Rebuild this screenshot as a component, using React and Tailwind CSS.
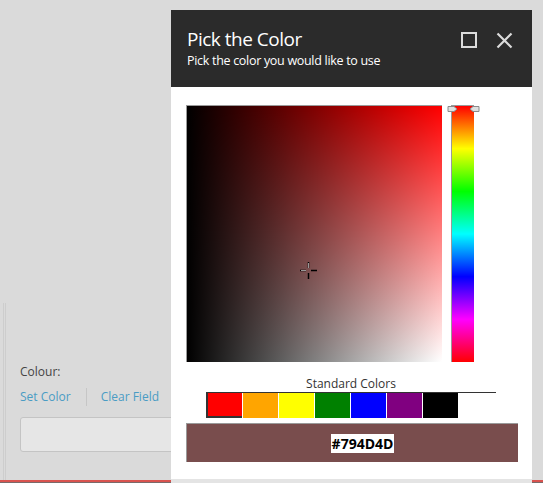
export default function App() {
  const swatches = ["#ff0000", "#ffa500", "#ffff00", "#008000", "#0000ff", "#800080", "#000000"];
  return (
    <div className="relative w-[543px] h-[483px] bg-[#dadada] overflow-hidden" style={{ fontFamily: '"Open Sans", "Noto Sans", sans-serif' }}>
      {/* background form */}
      <div className="ml-[3px] mt-[303px] h-[177px] border-l border-[#cdcdcd] pl-[1px]">
        <div className="h-full border-l border-[#cdcdcd] pl-[14px] pt-[61px]">
          <div className="text-[12px] leading-[16px] text-[#444]">Colour:</div>
          <div className="mt-[8px] flex items-center text-[12px] leading-[16px] text-[#4a9cc4]">
            <span>Set Color</span>
            <span className="ml-[15px] mr-[14px] h-[18px] w-px bg-[#c6c6c6]"></span>
            <span>Clear Field</span>
          </div>
          <div className="mt-[11px] h-[35px] w-[300px] rounded-[3px] border border-[#c4c4c4] bg-[#e6e6e6]"></div>
        </div>
      </div>
      <div className="h-[2px] bg-[#d9534f]"></div>
      <div className="h-[1px] bg-[#7a6a6a]"></div>

      {/* dialog */}
      <div className="absolute left-[171px] top-[10px] w-[361px] h-[473px] bg-white border-b-4 border-[#e4e4e4]">
        <div className="h-[77px] bg-[#2b2b2b] px-[16px] pt-[15px] flex justify-between">
          <div>
            <div className="text-[19px] leading-[28px] tracking-[-0.5px] text-white">Pick the Color</div>
            <div className="mt-[-1px] text-[12.5px] leading-[18px] tracking-[-0.3px] text-white">Pick the color you would like to use</div>
          </div>
          <div className="flex gap-[19px] pt-[7px] pr-[3px]">
            <svg width="16" height="16" viewBox="0 0 16 16">
              <rect x="1" y="1" width="14" height="14" fill="none" stroke="#dcdcdc" strokeWidth="2" />
            </svg>
            <svg width="17" height="17" viewBox="0 0 17 17">
              <path d="M1.5 1.5 L15.5 15.5 M15.5 1.5 L1.5 15.5" stroke="#dcdcdc" strokeWidth="2.2" />
            </svg>
          </div>
        </div>
        <div className="pt-[18px] pl-[15px] pr-[14px]">
          <div className="flex">
            <div className="relative w-[256px] h-[257px] border-l border-t border-[#9a9a9a] bg-[#ff0000]">
              <div className="absolute inset-0 bg-gradient-to-b from-transparent to-white"></div>
              <div className="absolute inset-0 bg-gradient-to-r from-black to-transparent"></div>
              <svg className="absolute left-[113px] top-[156px]" width="17" height="17" viewBox="0 0 17 17">
                <path d="M8.5 0 V6 M8.5 11 V17 M0 8.5 H6 M11 8.5 H17" stroke="#000" strokeWidth="1.5" />
                <path d="M8.5 1 V6 M1 8.5 H6" stroke="#fff" strokeWidth="0.6" />
              </svg>
            </div>
            <div className="relative ml-[9px] w-[23px] h-[257px] border-l border-t border-[#9a9a9a]" style={{ background: "linear-gradient(to bottom, #ff0000 0%, #ffff00 16.66%, #00ff00 33.33%, #00ffff 50%, #0000ff 66.66%, #ff00ff 83.33%, #ff0000 100%)" }}>
              <svg className="absolute left-[-5px] top-[-1px]" width="11" height="8" viewBox="0 0 11 8">
                <path d="M1 1.5 H7 L10 4 L7 6.5 H1 Z" fill="#e0e0e0" stroke="#8a8a8a" strokeWidth="1" />
              </svg>
              <svg className="absolute right-[-6px] top-[-1px]" width="11" height="8" viewBox="0 0 11 8">
                <path d="M10 1.5 H4 L1 4 L4 6.5 H10 Z" fill="#e0e0e0" stroke="#8a8a8a" strokeWidth="1" />
              </svg>
            </div>
          </div>
          <div className="ml-[20px] mt-[14px] w-[290px] border-b border-[#333] text-center text-[12px] leading-[16px] text-[#333]">Standard Colors</div>
          <div className="ml-[20px] flex gap-px">
            {swatches.map((c, i) => (
              <div key={c} className={i === 0 ? "w-[36px] h-[25px] border-l-2 border-b-2 border-[#333]" : "w-[35px] h-[25px]"} style={{ backgroundColor: c }}></div>
            ))}
          </div>
          <div className="mt-[5px] h-[39px] w-[332px] border-l border-t border-[#9a9a9a] bg-[#794d4d] flex items-center justify-center pl-[20px]">
            <span className="bg-white px-px text-[14px] leading-[19px] font-bold text-black">#794D4D</span>
          </div>
        </div>
      </div>
    </div>
  );
}
